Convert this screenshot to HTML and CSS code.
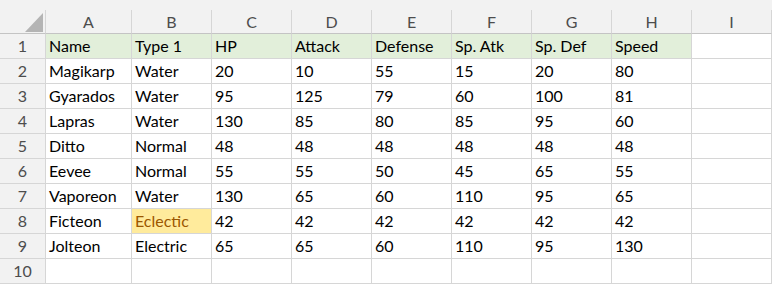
FILE: index.html
```html
<!DOCTYPE html>
<html lang="en">
<head>
    <meta charset="UTF-8">
    <meta name="viewport" content="width=device-width, initial-scale=1.0">
    <title>Pokemon Stats</title>
    <link rel="stylesheet" href="styles.css">
</head>
<body>
    <div class="sheet">
        <!-- column headers -->
        <div class="col-head corner"><span class="select-all"></span></div>
        <div class="col-head">A</div>
        <div class="col-head">B</div>
        <div class="col-head">C</div>
        <div class="col-head">D</div>
        <div class="col-head">E</div>
        <div class="col-head">F</div>
        <div class="col-head">G</div>
        <div class="col-head">H</div>
        <div class="col-head">I</div>

        <div class="row-head">1</div>
        <div class="cell title">Name</div>
        <div class="cell title">Type 1</div>
        <div class="cell title">HP</div>
        <div class="cell title">Attack</div>
        <div class="cell title">Defense</div>
        <div class="cell title">Sp. Atk</div>
        <div class="cell title">Sp. Def</div>
        <div class="cell title">Speed</div>
        <div class="cell"></div>

        <div class="row-head">2</div>
        <div class="cell">Magikarp</div>
        <div class="cell">Water</div>
        <div class="cell">20</div>
        <div class="cell">10</div>
        <div class="cell">55</div>
        <div class="cell">15</div>
        <div class="cell">20</div>
        <div class="cell">80</div>
        <div class="cell"></div>

        <div class="row-head">3</div>
        <div class="cell">Gyarados</div>
        <div class="cell">Water</div>
        <div class="cell">95</div>
        <div class="cell">125</div>
        <div class="cell">79</div>
        <div class="cell">60</div>
        <div class="cell">100</div>
        <div class="cell">81</div>
        <div class="cell"></div>

        <div class="row-head">4</div>
        <div class="cell">Lapras</div>
        <div class="cell">Water</div>
        <div class="cell">130</div>
        <div class="cell">85</div>
        <div class="cell">80</div>
        <div class="cell">85</div>
        <div class="cell">95</div>
        <div class="cell">60</div>
        <div class="cell"></div>

        <div class="row-head">5</div>
        <div class="cell">Ditto</div>
        <div class="cell">Normal</div>
        <div class="cell">48</div>
        <div class="cell">48</div>
        <div class="cell">48</div>
        <div class="cell">48</div>
        <div class="cell">48</div>
        <div class="cell">48</div>
        <div class="cell"></div>

        <div class="row-head">6</div>
        <div class="cell">Eevee</div>
        <div class="cell">Normal</div>
        <div class="cell">55</div>
        <div class="cell">55</div>
        <div class="cell">50</div>
        <div class="cell">45</div>
        <div class="cell">65</div>
        <div class="cell">55</div>
        <div class="cell"></div>

        <div class="row-head">7</div>
        <div class="cell">Vaporeon</div>
        <div class="cell">Water</div>
        <div class="cell">130</div>
        <div class="cell">65</div>
        <div class="cell">60</div>
        <div class="cell">110</div>
        <div class="cell">95</div>
        <div class="cell">65</div>
        <div class="cell"></div>

        <div class="row-head">8</div>
        <div class="cell">Ficteon</div>
        <div class="cell neutral">Eclectic</div>
        <div class="cell">42</div>
        <div class="cell">42</div>
        <div class="cell">42</div>
        <div class="cell">42</div>
        <div class="cell">42</div>
        <div class="cell">42</div>
        <div class="cell"></div>

        <div class="row-head">9</div>
        <div class="cell">Jolteon</div>
        <div class="cell">Electric</div>
        <div class="cell">65</div>
        <div class="cell">65</div>
        <div class="cell">60</div>
        <div class="cell">110</div>
        <div class="cell">95</div>
        <div class="cell">130</div>
        <div class="cell"></div>

        <div class="row-head">10</div>
        <div class="cell"></div>
        <div class="cell"></div>
        <div class="cell"></div>
        <div class="cell"></div>
        <div class="cell"></div>
        <div class="cell"></div>
        <div class="cell"></div>
        <div class="cell"></div>
        <div class="cell"></div>
    </div>
</body>
</html>
```
FILE: styles.css
```css
body {
    margin: 0;
    background: #ffffff;
    font-family: Lato, "Noto Sans", sans-serif;
    font-size: 16px;
}
.sheet {
    display: grid;
    grid-template-columns: 46px 86px repeat(8, 80px);
    grid-template-rows: 34px;
    grid-auto-rows: 25px;
    width: 772px;
    background: #f2f2f2;
}
.col-head {
    margin-top: 10px;
    box-sizing: border-box;
    border-right: 1px solid #d6d6d6;
    border-bottom: 1px solid #c4c4c4;
    color: #4d4d4d;
    text-align: center;
    line-height: 23px;
}
.corner {
    display: flex;
    justify-content: flex-end;
    align-items: flex-end;
    padding: 0 2px 1px 0;
}
.select-all {
    width: 0;
    height: 0;
    border-left: 18px solid transparent;
    border-bottom: 19px solid #b4b4b4;
}
.row-head {
    box-sizing: border-box;
    border-right: 1px solid #d6d6d6;
    border-bottom: 1px solid #d6d6d6;
    color: #4d4d4d;
    text-align: center;
    line-height: 24px;
}
.cell {
    box-sizing: border-box;
    padding-left: 3px;
    border-right: 1px solid #d6d6d6;
    border-bottom: 1px solid #d6d6d6;
    background: #ffffff;
    color: #000000;
    line-height: 24px;
    white-space: nowrap;
    overflow: hidden;
}
.title {
    background: #e2efda;
}
.neutral {
    background: #ffeb9c;
    color: #9c5700;
}
```
